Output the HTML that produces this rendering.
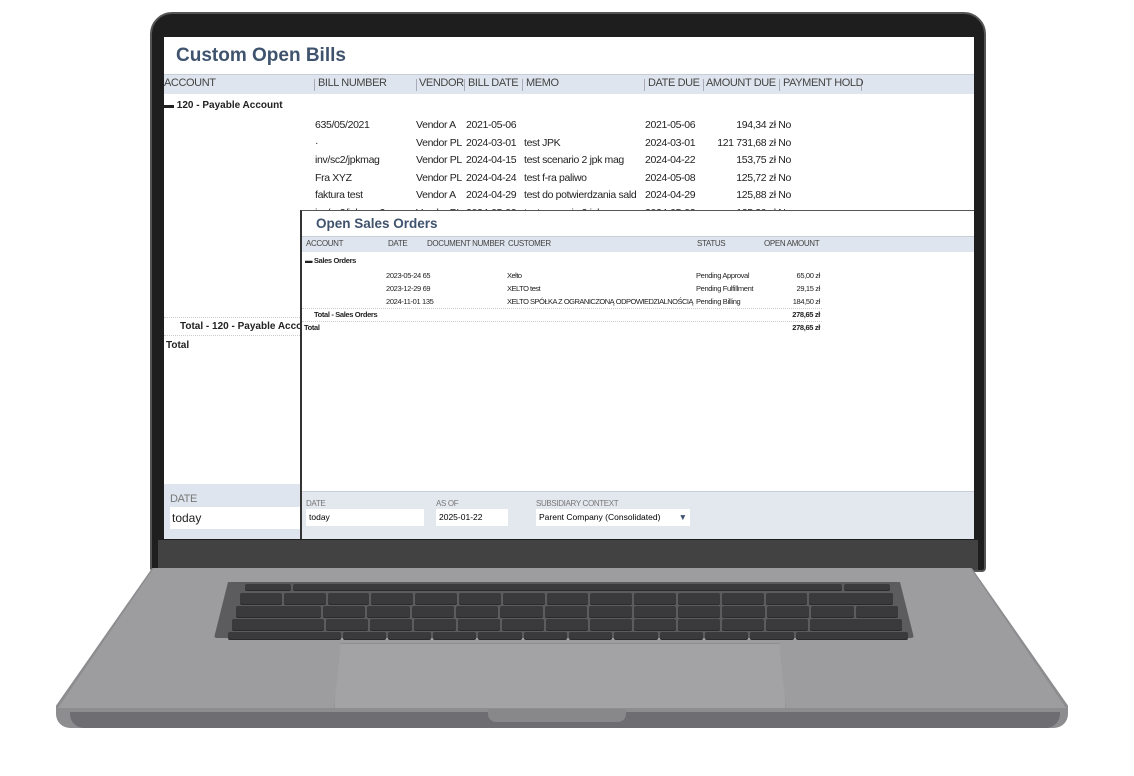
<!DOCTYPE html>
<html><head><meta charset="utf-8"><style>
*{margin:0;padding:0;box-sizing:border-box}
body{width:1134px;height:776px;background:#fff;position:relative;overflow:hidden;font-family:"Liberation Sans",sans-serif}
.a{position:absolute}
.t{position:absolute;white-space:nowrap;color:#222}
.hd{color:#444;letter-spacing:-0.4px}
.kb{position:absolute;left:214px;top:582px;width:700px;height:56px;background:#5c5c5e;border-radius:3px}
.row{position:absolute;display:flex;gap:2px}
.row i{display:block;height:11px;background:#3a3a3c;border-radius:2px;flex:1 1 auto;box-shadow:0 1px 0 #2a2a2a}
.s .t{letter-spacing:-0.35px}
.sep{position:absolute;top:42px;width:1px;height:12px;background:#aab}
</style></head><body>
<div class="a" style="left:150px;top:12px;width:836px;height:560px;background:#1e1e1e;border-radius:22px 22px 4px 4px;border:2px solid #555"></div>
<div class="a" style="left:158px;top:540px;width:820px;height:30px;background:#424242"></div>
<div class="a" style="left:164px;top:37px;width:810px;height:502px;background:#fff;overflow:hidden">
  <div class="t" style="left:12px;top:8px;font-size:19px;font-weight:bold;color:#3f536e">Custom Open Bills</div>
  <div class="a" style="left:0;top:37px;width:810px;height:20px;background:#dfe5ee;border-top:1px solid #c8ced8"></div>
  <div class="sep" style="left:150px"></div><div class="sep" style="left:252px"></div><div class="sep" style="left:300px"></div><div class="sep" style="left:358px"></div><div class="sep" style="left:480px"></div><div class="sep" style="left:539px"></div><div class="sep" style="left:615px"></div><div class="sep" style="left:697px"></div>
  <div class="t hd" style="left:0;top:40px;font-size:11px">ACCOUNT</div>
  <div class="t hd" style="left:154px;top:40px;font-size:11px">BILL NUMBER</div>
  <div class="t hd" style="left:255px;top:40px;font-size:11px">VENDOR</div>
  <div class="t hd" style="left:304px;top:40px;font-size:11px">BILL DATE</div>
  <div class="t hd" style="left:362px;top:40px;font-size:11px">MEMO</div>
  <div class="t hd" style="left:484px;top:40px;font-size:11px">DATE DUE</div>
  <div class="t hd" style="left:542px;top:40px;font-size:11px">AMOUNT DUE</div>
  <div class="t hd" style="left:619px;top:40px;font-size:11px">PAYMENT HOLD</div>
  <div class="t" style="left:0;top:63px;font-size:10px;font-weight:bold">▬ 120 - Payable Account</div>
  <div class="s" style="position:absolute;left:0;top:80px;font-size:10.5px;color:#222;line-height:17.5px">
   <div class="t" style="left:151px">635/05/2021<br>·<br>inv/sc2/jpkmag<br>Fra XYZ<br>faktura test<br>inv/sc2/jpkmag2</div>
   <div class="t" style="left:252px">Vendor A<br>Vendor PL<br>Vendor PL<br>Vendor PL<br>Vendor A<br>Vendor PL</div>
   <div class="t" style="left:302px">2021-05-06<br>2024-03-01<br>2024-04-15<br>2024-04-24<br>2024-04-29<br>2024-05-02</div>
   <div class="t" style="left:360px"><br>test JPK<br>test scenario 2 jpk mag<br>test f-ra paliwo<br>test do potwierdzania sald<br>test scenario 2 jpk mag</div>
   <div class="t" style="left:481px">2021-05-06<br>2024-03-01<br>2024-04-22<br>2024-05-08<br>2024-04-29<br>2024-05-02</div>
   <div class="t" style="left:530px;width:97px;text-align:right">194,34 zł No<br>121 731,68 zł No<br>153,75 zł No<br>125,72 zł No<br>125,88 zł No<br>125,20 zł No</div>
  </div>
  <div class="a" style="left:0;top:280px;width:140px;border-top:1px dotted #ccc"></div>
  <div class="t" style="left:16px;top:284px;font-size:10px;font-weight:bold">Total - 120 - Payable Account</div>
  <div class="a" style="left:0;top:298px;width:140px;border-top:1px dotted #ccc"></div>
  <div class="t" style="left:2px;top:303px;font-size:10px;font-weight:bold">Total</div>
  <div class="a" style="left:0;top:447px;width:140px;height:55px;background:#dfe5ee"></div>
  <div class="t hd" style="left:6px;top:456px;font-size:11px;color:#777">DATE</div>
  <div class="a" style="left:6px;top:470px;width:134px;height:22px;background:#fff"></div>
  <div class="t" style="left:8px;top:474px;font-size:12px">today</div>
  <div class="a s" style="left:136px;top:173px;width:680px;height:330px;background:#fff;border-left:2px solid #333;border-top:1px solid #555">
    <div class="t" style="left:14px;top:5px;font-size:13.5px;font-weight:bold;color:#3f536e;letter-spacing:0">Open Sales Orders</div>
    <div class="a" style="left:0;top:25px;width:680px;height:16px;background:#dfe5ee;border-top:1px solid #c8ced8"></div>
    <div class="t hd" style="left:4px;top:28px;font-size:8px">ACCOUNT</div>
    <div class="t hd" style="left:86px;top:28px;font-size:8px">DATE</div>
    <div class="t hd" style="left:125px;top:28px;font-size:8px">DOCUMENT NUMBER</div>
    <div class="t hd" style="left:206px;top:28px;font-size:8px">CUSTOMER</div>
    <div class="t hd" style="left:395px;top:28px;font-size:8px">STATUS</div>
    <div class="t hd" style="left:462px;top:28px;font-size:8px">OPEN AMOUNT</div>
    <div class="t" style="left:3px;top:45px;font-size:7.5px;font-weight:bold">▬ Sales Orders</div>
    <div style="position:absolute;top:58px;left:0;font-size:7.5px;line-height:13px">
     <div class="t" style="left:84px">2023-05-24 65<br>2023-12-29 69<br>2024-11-01 135</div>
     <div class="t" style="left:205px;letter-spacing:-0.5px">Xelto<br>XELTO test<br>XELTO SPÓŁKA Z OGRANICZONĄ ODPOWIEDZIALNOŚCIĄ</div>
     <div class="t" style="left:394px">Pending Approval<br>Pending Fulfillment<br>Pending Billing</div>
     <div class="t" style="left:460px;width:58px;text-align:right">65,00 zł<br>29,15 zł<br>184,50 zł</div>
    </div>
    <div class="a" style="left:0;top:97px;width:520px;border-top:1px dotted #ccc"></div>
    <div class="t" style="left:12px;top:99px;font-size:7.5px;font-weight:bold">Total - Sales Orders</div>
    <div class="t" style="left:460px;top:99px;width:58px;text-align:right;font-size:7.5px;font-weight:bold">278,65 zł</div>
    <div class="a" style="left:0;top:110px;width:520px;border-top:1px dotted #ccc"></div>
    <div class="t" style="left:2px;top:112px;font-size:7.5px;font-weight:bold">Total</div>
    <div class="t" style="left:460px;top:112px;width:58px;text-align:right;font-size:7.5px;font-weight:bold">278,65 zł</div>
    <div class="a" style="left:0;top:280px;width:680px;height:50px;background:#e3e8ef;border-top:1px solid #c8ced8"></div>
    <div class="t" style="left:4px;top:288px;font-size:8px;color:#777">DATE</div>
    <div class="t" style="left:134px;top:288px;font-size:8px;color:#777">AS OF</div>
    <div class="t" style="left:234px;top:288px;font-size:8px;color:#777">SUBSIDIARY CONTEXT</div>
    <div class="a" style="left:4px;top:298px;width:118px;height:17px;background:#fff;font-size:8.5px;padding:3px 3px">today</div>
    <div class="a" style="left:134px;top:298px;width:72px;height:17px;background:#fff;font-size:8.5px;padding:3px 3px">2025-01-22</div>
    <div class="a" style="left:234px;top:298px;width:154px;height:17px;background:#fff;font-size:8.5px;padding:3px 3px">Parent Company (Consolidated) <span style="color:#3f536e;float:right">▼</span></div>
  </div>
</div>
<div class="a" style="left:56px;top:568px;width:1012px;height:160px;background:#8d8d90;clip-path:polygon(9.5% 0,90.5% 0,100% 86%,100% 100%,0 100%,0 86%);border-radius:0 0 14px 14px"></div>
<div class="a" style="left:58px;top:568px;width:1008px;height:140px;background:#9d9da0;clip-path:polygon(9.5% 0,90.5% 0,100% 100%,0 100%)"></div>
<div class="a" style="left:70px;top:712px;width:990px;height:16px;background:#6e6e72;border-radius:0 0 14px 14px"></div>
<div class="a" style="left:488px;top:708px;width:138px;height:14px;background:#88888b;border-radius:0 0 8px 8px"></div>
<div class="kb" style="clip-path:polygon(2% 0,98% 0,100% 100%,0 100%)"></div>
<div class="row" style="left:245px;top:584px;width:645px"><i style="height:6px"></i><i style="height:6px;flex-grow:12"></i><i style="height:6px"></i></div>
<div class="row" style="left:240px;top:593px;width:653px"><i></i><i></i><i></i><i></i><i></i><i></i><i></i><i></i><i></i><i></i><i></i><i></i><i></i><i style="flex-grow:2"></i></div>
<div class="row" style="left:236px;top:606px;width:662px"><i style="flex-grow:2"></i><i></i><i></i><i></i><i></i><i></i><i></i><i></i><i></i><i></i><i></i><i></i><i></i><i></i></div>
<div class="row" style="left:232px;top:619px;width:670px"><i style="flex-grow:2.2"></i><i></i><i></i><i></i><i></i><i></i><i></i><i></i><i></i><i></i><i></i><i></i><i style="flex-grow:2.2"></i></div>
<div class="row" style="left:228px;top:632px;width:680px"><i style="flex-grow:2.6;height:7px"></i><i style="height:7px"></i><i style="height:7px"></i><i style="height:7px"></i><i style="height:7px"></i><i style="height:7px"></i><i style="height:7px"></i><i style="height:7px"></i><i style="height:7px"></i><i style="height:7px"></i><i style="height:7px"></i><i style="flex-grow:2.6;height:7px"></i></div>
<div class="a" style="left:334px;top:643px;width:452px;height:66px;background:#a3a3a6;border:1px solid #8e8e91;clip-path:polygon(1.5% 0,98.5% 0,100% 100%,0 100%)"></div>
</body></html>
